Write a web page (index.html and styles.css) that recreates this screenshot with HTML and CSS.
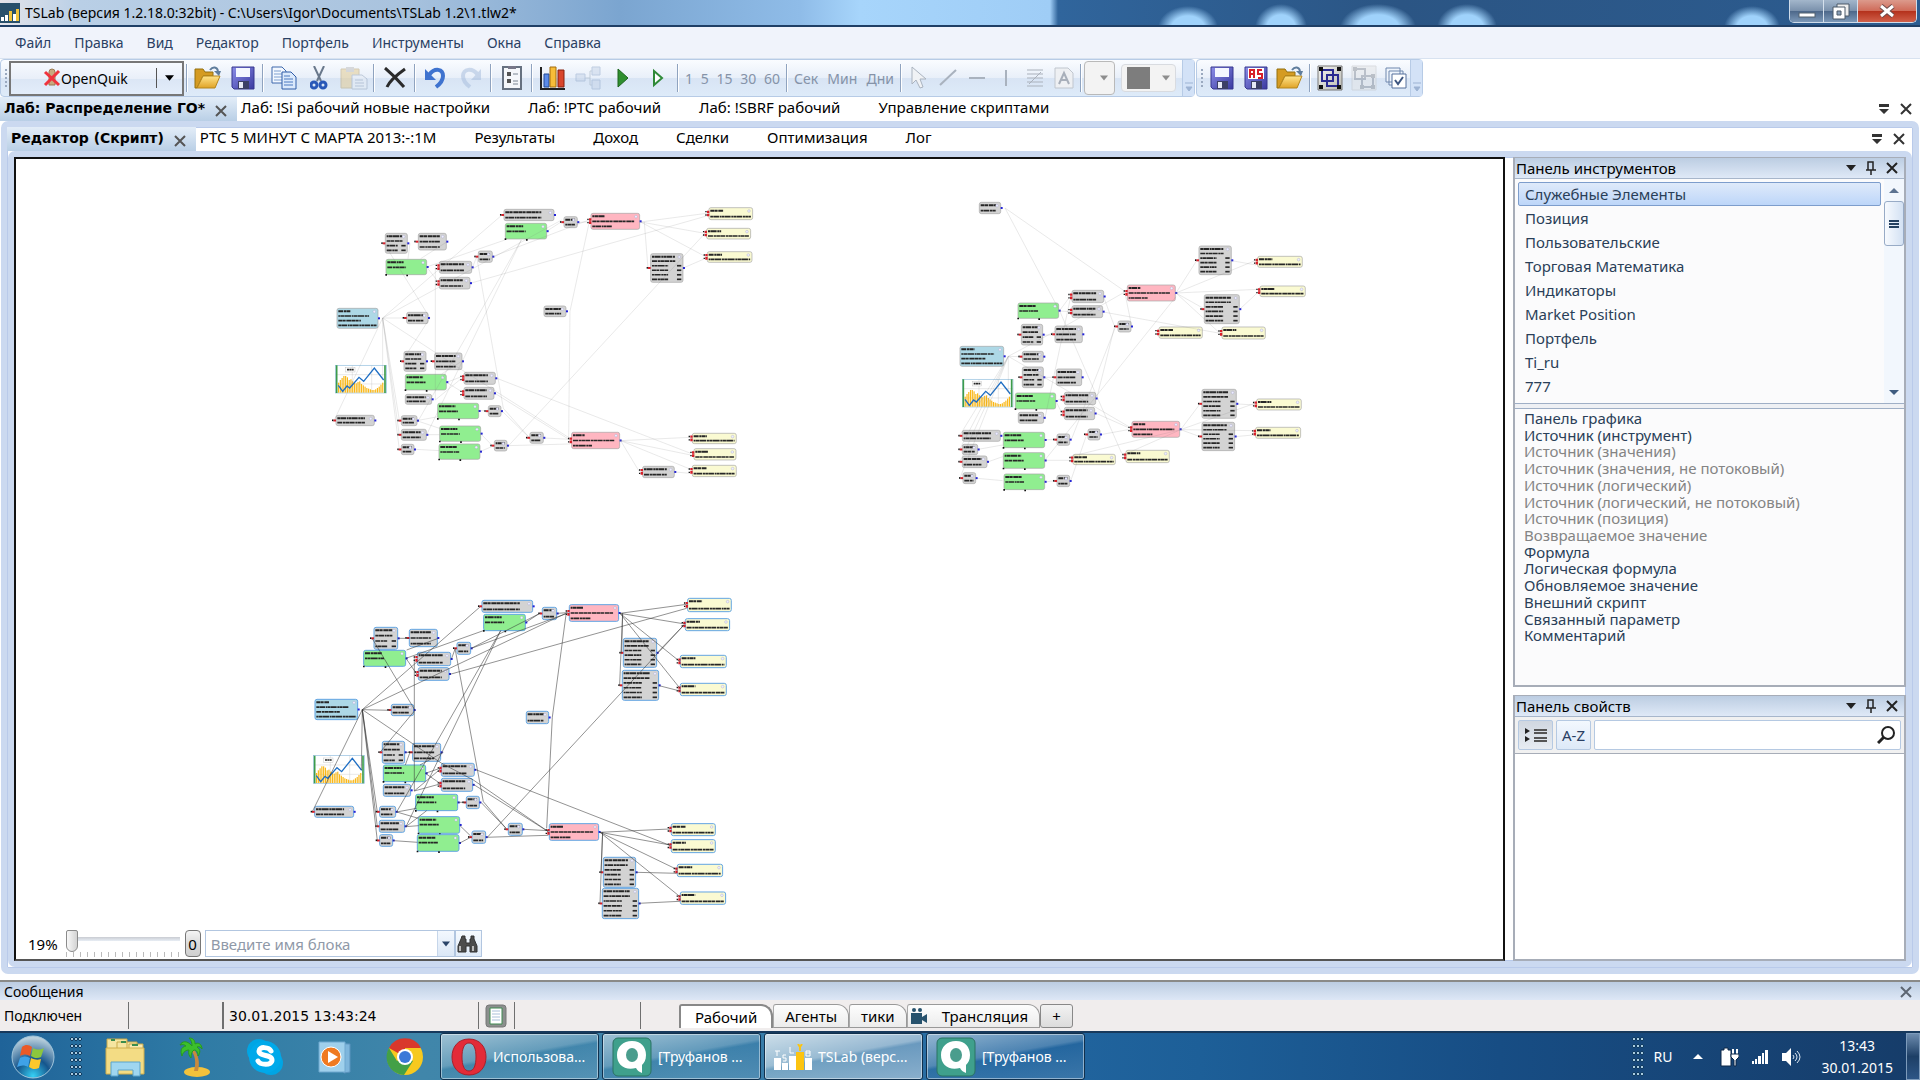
FILE: index.html
```html
<!DOCTYPE html>
<html lang="ru">
<head>
    <meta charset="UTF-8">
    <meta name="viewport" content="width=device-width, initial-scale=1.0">
    <title>TSLab</title>
    <link rel="stylesheet" href="styles.css">
</head>
<body>
    <!-- Shared icons -->
    <svg class="sprite" aria-hidden="true">
        <defs>
            <linearGradient id="gold" x1="0" y1="0" x2="0" y2="1"><stop offset="0" stop-color="#ffe48a"/><stop offset="1" stop-color="#e0a326"/></linearGradient>
            <linearGradient id="violet" x1="0" y1="0" x2="1" y2="1"><stop offset="0" stop-color="#8c8ee8"/><stop offset="1" stop-color="#3a3aa0"/></linearGradient>
            <linearGradient id="grid-btn" x1="0" y1="0" x2="1" y2="1"><stop offset="0" stop-color="#f4f4f0"/><stop offset="1" stop-color="#b9bab4"/></linearGradient>
        </defs>
        <symbol id="i-open" viewBox="0 0 28 26">
            <path d="M1 4h8l2 3h8v4H9L3 23H1z" fill="#d59b22" stroke="#94700f"/>
            <path d="M9 11h17l-5 12H3z" fill="url(#gold)" stroke="#b5861c"/>
            <path d="M16 5c3-4 7-3 8 1" fill="none" stroke="#5f7d9c" stroke-width="2"/><path d="M20 6h7l-2 5z" fill="#5f7d9c"/>
        </symbol>
        <symbol id="i-save" viewBox="0 0 24 24">
            <path d="M1 1h22v22H3l-2-2z" fill="url(#violet)" stroke="#37378f"/>
            <path d="M5 2h14v9H5z" fill="#f4f7ff"/><path d="M7 15h11v8H7z" fill="#3c3f66"/><path d="M8 16h4v6H8z" fill="#e6e9f5"/>
        </symbol>
        <symbol id="i-saveas" viewBox="0 0 24 24">
            <path d="M1 1h22v22H3l-2-2z" fill="url(#violet)" stroke="#37378f"/>
            <path d="M4 2h16v11H4z" fill="#fff"/><path d="M6 12V4h4v8M6 8h4M18 4h-4v4h4v4h-4" fill="none" stroke="#d8202a" stroke-width="2"/>
            <path d="M7 15h11v8H7z" fill="#3c3f66"/><path d="M8 16h4v6H8z" fill="#e6e9f5"/>
        </symbol>
        <symbol id="i-drop" viewBox="0 0 10 6"><path d="M0 0h10L5 6z" fill="currentColor"/></symbol>
        <symbol id="i-cross" viewBox="0 0 12 12"><path d="M1 1l10 10M11 1L1 11" stroke="currentColor" stroke-width="2" fill="none"/></symbol>
        <symbol id="i-list" viewBox="0 0 10 10"><path d="M0 0h10v3H0zM0 5h10L5 10z" fill="currentColor"/></symbol>
        <symbol id="i-pin" viewBox="0 0 10 14"><path d="M2 9V1h5v8M7 1v8M0 9h10M5 9v5" stroke="currentColor" stroke-width="1.5" fill="none"/></symbol>
        <symbol id="i-chat" viewBox="0 0 40 40">
            <rect x="1" y="1" width="38" height="38" rx="5" fill="#3fa08c" stroke="#2b7263"/>
            <path d="M20 4c9 0 14 6 14 14 0 5-2 8-4 10v8c-3-1-5-3-6-5-11 3-19-3-19-13C5 10 11 4 20 4z" fill="#fff"/><ellipse cx="20" cy="18" rx="6" ry="7" fill="#4a9d8d"/>
        </symbol>
    </svg>

    <header class="titlebar">
        <svg class="app-icon" viewBox="0 0 20 20"><path d="M0 0h20v20H0z" fill="#28506b"/><path d="M1 14h3v4H1zM5 12h3v6H5zM13 11h3v7h-3z" fill="#fff"/><path d="M9 8h3v10H9zM16 6h3v12h-3z" fill="#f0c33c"/></svg>
        <span class="title">TSLab (версия 1.2.18.0:32bit) - C:\Users\Igor\Documents\TSLab 1.2\1.tlw2*</span>
        <div class="window-buttons">
            <button class="min" aria-label="Свернуть"><svg width="18" height="6"><rect x="1" y="1" width="16" height="4" fill="#fff" stroke="#50606f"/></svg></button>
            <button class="max" aria-label="Восстановить"><svg width="18" height="17"><path d="M5 1h12v12H5z" fill="#eee" stroke="#4d5b69"/><path d="M1 4h12v12H1z" fill="#fff" stroke="#4d5b69"/><path d="M5 8h4v4H5z" fill="#8ba0b8" stroke="#4d5b69"/></svg></button>
            <button class="exit" aria-label="Закрыть"><svg width="16" height="14"><path d="M2 2l12 10M14 2L2 12" stroke="#6b4a4a" stroke-width="5"/><path d="M2 2l12 10M14 2L2 12" stroke="#fff" stroke-width="3"/></svg></button>
        </div>
    </header>

    <nav class="menu">
        <a href="#">Файл</a><a href="#">Правка</a><a href="#">Вид</a><a href="#">Редактор</a><a href="#">Портфель</a><a href="#">Инструменты</a><a href="#">Окна</a><a href="#">Справка</a>
    </nav>

    <div class="toolbars">
        <div class="toolbar">
            <i class="grip"></i>
            <button class="quik">
                <svg width="18" height="20"><path d="M6 4a3 3 0 0 1 6 0v13H6z" fill="#c9a87e" stroke="#9a7b52"/><path d="M2 4l14 13M16 3L2 17" stroke="#f0333d" stroke-width="3"/></svg>
                <span>OpenQuik</span>
                <svg class="quik-drop" width="10" height="6"><use href="#i-drop"/></svg>
            </button>
            <i class="sep"></i>
            <button class="tool" aria-label="Открыть"><svg width="28" height="26"><use href="#i-open"/></svg></button>
            <button class="tool" aria-label="Сохранить"><svg width="24" height="24"><use href="#i-save"/></svg></button>
            <i class="sep"></i>
            <button class="tool" aria-label="Копировать"><svg width="26" height="24"><path d="M1 1h10l4 4v12H1z" fill="#f3f8ff" stroke="#3f69ac"/><path d="M3 5h7M3 8h9M3 11h9M3 14h9" stroke="#7fa0d0"/><path d="M11 6h9l5 5v12H11z" fill="#dbe9fb" stroke="#2f5ca8"/><path d="M13 10h6M13 13h9M13 16h9M13 19h9" stroke="#4a79c0"/></svg></button>
            <button class="tool" aria-label="Вырезать"><svg width="18" height="24"><path d="M4 0l7 15M14 0L7 15" stroke="#69788b" stroke-width="2"/><circle cx="4" cy="19" r="3" fill="none" stroke="#2858b8" stroke-width="3"/><circle cx="13" cy="19" r="3" fill="none" stroke="#2858b8" stroke-width="3"/></svg></button>
            <button class="tool faded" aria-label="Вставить"><svg width="28" height="24"><path d="M1 3h18v19H1z" fill="#e3c98a" stroke="#b7a271"/><path d="M6 1h8v5H6z" fill="#bbb"/><path d="M12 9h10l5 4v10H12z" fill="#e6ecf4" stroke="#93a4bb"/><path d="M15 14h8M15 17h9M15 20h9" stroke="#93a4bb"/></svg></button>
            <i class="sep"></i>
            <button class="tool" aria-label="Удалить"><svg width="24" height="22"><path d="M2 1c6 5 13 12 19 19M22 2C15 7 7 13 4 20" stroke="#2b2b2b" stroke-width="3" fill="none"/></svg></button>
            <i class="sep"></i>
            <button class="tool" aria-label="Отменить"><svg width="24" height="24"><path d="M5 9c6-8 14-6 14 1 0 5-3 8-7 11" fill="none" stroke="#3f73cf" stroke-width="4"/><path d="M1 3v11h11z" fill="#3f73cf"/></svg></button>
            <button class="tool faded" aria-label="Повторить"><svg width="24" height="24"><path d="M19 9C13 1 4 3 4 10c0 5 3 8 7 11" fill="none" stroke="#a4bbdc" stroke-width="4"/><path d="M22 3v11H12z" fill="#a4bbdc"/></svg></button>
            <i class="sep"></i>
            <button class="tool" aria-label="Свойства"><svg width="20" height="24"><path d="M1 1h18v22H1z" fill="#f5f7fa" stroke="#667180" stroke-width="2"/><path d="M5 6h4v4H5zM5 13h4v4H5z" fill="#555"/><path d="M11 8h5M11 15h5M11 18h5" stroke="#7a8592"/><path d="M6 0h8v3H6z" fill="#778"/></svg></button>
            <i class="sep"></i>
            <button class="tool" aria-label="График"><svg width="26" height="26"><path d="M1 2v22h24" fill="none" stroke="#222" stroke-width="2"/><path d="M4 9h5v13H4z" fill="#5b8be8" stroke="#234a96"/><path d="M10 2h6v20h-6z" fill="#f7bd38" stroke="#a46c0e"/><path d="M18 5h6v17h-6z" fill="#d9452b" stroke="#86210f"/></svg></button>
            <button class="tool faded" aria-label="Схема"><svg width="26" height="24"><path d="M9 12h6M15 5v14M15 5h3M15 19h3" stroke="#9ab" fill="none"/><path d="M1 8h9v7H1zM17 1h8v8h-8zM17 14h8v9h-8z" fill="#c6d4e8" stroke="#8fa7c9"/></svg></button>
            <button class="tool" aria-label="Пуск"><svg width="12" height="20"><path d="M1 1l10 9-10 9z" fill="#2f8f2f" stroke="#1d641d"/></svg></button>
            <button class="tool" aria-label="Шаг"><svg width="12" height="20"><path d="M2 3l8 7-8 7z" fill="#fff" stroke="#2f8a38" stroke-width="2"/></svg></button>
            <i class="sep"></i>
            <div class="periods"><button>1</button><button>5</button><button>15</button><button>30</button><button>60</button></div>
            <i class="sep"></i>
            <div class="periods units"><button>Сек</button><button>Мин</button><button>Дни</button></div>
            <i class="sep"></i>
            <button class="draw" aria-label="Курсор"><svg width="18" height="24"><path d="M2 1v17l4-4 4 8 3-1-3-8h6z" fill="#f0f2f5" stroke="#aab3bf"/></svg></button>
            <button class="draw" aria-label="Линия"><svg width="18" height="18"><path d="M1 16L17 1" stroke="#a9b2be" stroke-width="2"/></svg></button>
            <button class="draw" aria-label="Горизонталь"><svg width="18" height="4"><path d="M1 2h16" stroke="#a9b2be" stroke-width="2"/></svg></button>
            <button class="draw" aria-label="Вертикаль"><svg width="4" height="18"><path d="M2 1v16" stroke="#a9b2be" stroke-width="2"/></svg></button>
            <button class="draw" aria-label="Уровни"><svg width="18" height="18"><path d="M1 1h16M1 5h16M1 9h16M1 13h16M1 17h16M3 15L15 3" stroke="#aab1bb"/></svg></button>
            <button class="draw" aria-label="Текст"><svg width="20" height="22"><path d="M1 1h13l5 5v15H1z" fill="#eef0f3" stroke="#c0c6ce"/><path d="M5 17l5-11 5 11M7 13h6" fill="none" stroke="#a8afba" stroke-width="2"/></svg></button>
            <i class="sep"></i>
            <button class="pick" aria-label="Толщина"><svg width="8" height="6"><use href="#i-drop"/></svg></button>
            <button class="pick color" aria-label="Цвет"><i></i><svg width="8" height="6"><use href="#i-drop"/></svg></button>
            <span class="overflow"><svg width="8" height="10"><path d="M0 1h8M1 5h6L4 9z" fill="#9db3d3" stroke="#9db3d3"/></svg></span>
        </div>
        <div class="toolbar script-tools">
            <i class="grip"></i>
            <button class="tool" aria-label="Сохранить скрипт"><svg width="24" height="24"><use href="#i-save"/></svg></button>
            <button class="tool" aria-label="Сохранить как"><svg width="24" height="24"><use href="#i-saveas"/></svg></button>
            <button class="tool" aria-label="Открыть скрипт"><svg width="28" height="26"><use href="#i-open"/></svg></button>
            <i class="sep"></i>
            <button class="tool" aria-label="Группировать"><svg width="26" height="26"><path d="M1 1h24v24H1z" fill="url(#grid-btn)" stroke="#777"/><path d="M5 5h11v11H5zM10 10h11v11H10z" fill="none" stroke="#2a2a90" stroke-width="2"/><path d="M2 2h4v4H2zM20 2h4v4h-4zM2 20h4v4H2zM20 20h4v4h-4z" fill="#111"/></svg></button>
            <button class="tool faded" aria-label="Разгруппировать"><svg width="26" height="26"><path d="M1 1h24v24H1z" fill="#e4e5e6" stroke="#c2c4c6"/><path d="M4 4h10v10H4zM11 11h11v11H11z" fill="none" stroke="#888f9a" stroke-width="2"/><path d="M2 2h4v4H2zM20 9h4v4h-4zM9 20h4v4H9zM20 20h4v4h-4z" fill="#8a8f96"/></svg></button>
            <button class="draw" aria-label="Проверить"><svg width="22" height="22"><path d="M1 1h14v14H1zM4 4h14v14H4z" fill="#eef4fc" stroke="#6e87ad"/><path d="M7 7h14v14H7z" fill="#fff" stroke="#56709c"/><path d="M10 13l3 4 5-7" fill="none" stroke="#3d557f" stroke-width="2"/></svg></button>
            <span class="overflow"><svg width="8" height="10"><path d="M0 1h8M1 5h6L4 9z" fill="#9db3d3" stroke="#9db3d3"/></svg></span>
        </div>
    </div>

    <nav class="tabs">
        <a class="tab active" href="#">Лаб: Распределение ГО*<svg width="12" height="12"><use href="#i-cross"/></svg></a>
        <a class="tab" href="#">Лаб: !Si рабочий новые настройки</a><a class="tab" href="#">Лаб: !РТС рабочий</a><a class="tab" href="#">Лаб: !SBRF рабочий</a><a class="tab" href="#">Управление скриптами</a>
        <span class="tab-tools"><svg width="10" height="10"><use href="#i-list"/></svg><svg width="12" height="12"><use href="#i-cross"/></svg></span>
    </nav>

    <div class="frame outer">
        <nav class="tabs">
            <a class="tab active" href="#">Редактор (Скрипт)<svg width="12" height="12"><use href="#i-cross"/></svg></a>
            <a class="tab" href="#">РТС 5 МИНУТ С МАРТА 2013:-:1М</a><a class="tab" href="#">Результаты</a><a class="tab" href="#">Доход</a><a class="tab" href="#">Сделки</a><a class="tab" href="#">Оптимизация</a><a class="tab" href="#">Лог</a>
            <span class="tab-tools"><svg width="10" height="10"><use href="#i-list"/></svg><svg width="12" height="12"><use href="#i-cross"/></svg></span>
        </nav>
        <div class="frame inner">
            <main class="canvas">
                <svg class="diagram" id="diagram"></svg>
                <div class="zoombar">
                    <label for="scale">19%</label>
                    <span class="slider"><input type="range" id="scale" min="0" max="100" value="0"></span>
                    <button class="reset">0</button>
                    <span class="find"><input type="text" placeholder="Введите имя блока" aria-label="Имя блока"><button aria-label="Список"><svg width="8" height="6"><use href="#i-drop"/></svg></button></span>
                    <button class="binoculars" aria-label="Найти"><svg width="22" height="18"><path d="M5 1h3v3h1v4h4V4h1V1h3v3l3 7v6h-7v-6H9v6H1v-6l3-7z" fill="#4c4c4c" stroke="#333"/><path d="M3 11v5M16 11v5" stroke="#bbb" stroke-width="2"/></svg></button>
                </div>
            </main>
            <aside class="side">
                <section class="panel tools">
                    <h2>Панель инструментов<span><svg width="10" height="6"><use href="#i-drop"/></svg><svg width="10" height="14"><use href="#i-pin"/></svg><svg width="12" height="12"><use href="#i-cross"/></svg></span></h2>
                    <div class="groups">
                        <ul>
                            <li class="selected">Служебные Элементы</li><li>Позиция</li><li>Пользовательские</li><li>Торговая Математика</li><li>Индикаторы</li><li>Market Position</li><li>Портфель</li><li>Ti_ru</li><li>777</li>
                        </ul>
                        <div class="scroll">
                            <button aria-label="Вверх"><svg width="10" height="5"><path d="M0 5h10L5 0z" fill="#5d7391"/></svg></button>
                            <i class="thumb"><svg width="10" height="8"><path d="M0 1h10M0 4h10M0 7h10" stroke="#24405f" stroke-width="2"/></svg></i>
                            <button class="down" aria-label="Вниз"><svg width="10" height="5"><path d="M0 0h10L5 5z" fill="#3f5c80"/></svg></button>
                        </div>
                    </div>
                    <ul class="blocks">
                        <li>Панель графика</li>
                        <li>Источник (инструмент)</li>
                        <li class="off">Источник (значения)</li>
                        <li class="off">Источник (значения, не потоковый)</li>
                        <li class="off">Источник (логический)</li>
                        <li class="off">Источник (логический, не потоковый)</li>
                        <li class="off">Источник (позиция)</li>
                        <li class="off">Возвращаемое значение</li>
                        <li>Формула</li>
                        <li>Логическая формула</li>
                        <li>Обновляемое значение</li>
                        <li>Внешний скрипт</li>
                        <li>Связанный параметр</li>
                        <li>Комментарий</li>
                    </ul>
                </section>
                <section class="panel props">
                    <h2>Панель свойств<span><svg width="10" height="6"><use href="#i-drop"/></svg><svg width="10" height="14"><use href="#i-pin"/></svg><svg width="12" height="12"><use href="#i-cross"/></svg></span></h2>
                    <div class="props-bar">
                        <button class="pressed" aria-label="По группам"><svg width="22" height="14"><path d="M0 0l5 3-5 3zM0 8l5 3-5 3z" fill="#222"/><path d="M9 2h13M9 5h13M9 10h13M9 13h13" stroke="#555" stroke-width="2"/></svg></button>
                        <button>A-Z</button>
                        <span class="search"><input type="text" aria-label="Поиск свойства"><svg width="18" height="18"><circle cx="11" cy="7" r="6" fill="none" stroke="#222" stroke-width="2"/><path d="M7 11l-6 6" stroke="#222" stroke-width="3"/></svg></span>
                    </div>
                </section>
            </aside>
        </div>
    </div>

    <div class="messages">Сообщения<svg width="12" height="12"><use href="#i-cross"/></svg></div>

    <footer class="status">
        <span class="cell state">Подключен</span>
        <span class="cell blank"></span>
        <span class="cell stamp">30.01.2015 13:43:24</span>
        <span class="cell log"><svg width="22" height="24"><rect x="1" y="1" width="20" height="22" rx="3" fill="#8b8f8d" stroke="#777"/><path d="M5 4h12v16H5z" fill="#fff" stroke="#3f8a50"/><path d="M7 7h8M7 10h8M7 13h8M7 16h8" stroke="#a9c0da"/></svg></span>
        <span class="cell rest"></span>
        <div class="desks">
            <button class="on">Рабочий</button><button>Агенты</button><button>тики</button><button class="cam"><svg width="18" height="18"><circle cx="4" cy="3" r="2" fill="#27526d"/><circle cx="10" cy="3" r="2" fill="#27526d"/><path d="M1 6h11v4l5-3v9l-5-3v4H1z" fill="#27526d"/></svg>Трансляция</button><button class="add">+</button>
        </div>
    </footer>

    <div class="taskbar">
        <button class="start" aria-label="Пуск">
            <svg width="44" height="44"><defs><radialGradient id="orb" cx=".5" cy=".95" r=".9"><stop offset="0" stop-color="#35d0f5"/><stop offset=".45" stop-color="#15558c"/><stop offset="1" stop-color="#b9cfdc"/></radialGradient></defs><circle cx="22" cy="22" r="21" fill="url(#orb)" stroke="#9fc4da"/>
            <path d="M11 12c4-3 7-2 10 0l-2 9c-3-2-6-2-10 0z" fill="#ea5a28"/><path d="M22 13c4 2 7 2 11 0l-3 9c-4 2-7 1-10-1z" fill="#8cc63e"/><path d="M9 23c4-2 7-2 10 0l-2 9c-3-2-7-2-11 0z" fill="#3fa2e8"/><path d="M20 23c4 2 7 2 10 1l-2 9c-4 2-7 1-10-1z" fill="#fcc82c"/></svg>
        </button>
        <i class="dots"></i>
        <button class="launch" aria-label="Проводник"><svg width="40" height="40"><path d="M2 2h20v34H2zM12 5h20v30H12z" fill="#f5e5a0" stroke="#c7a948"/><path d="M24 7h14v28H24z" fill="#f8eab0" stroke="#c7a948"/><path d="M6 3h4M16 5h5M27 8h6" stroke="#3a8d4d" stroke-width="2"/><path d="M1 11h38v26H1z" fill="#f3dc84" stroke="#cfae4c"/><path d="M6 25h29v14h-7v-6H13v6H6z" fill="#9fd6f0" stroke="#5aa4cb"/></svg></button>
        <button class="launch" aria-label="Пальма"><svg width="32" height="40"><ellipse cx="18" cy="35" rx="13" ry="5" fill="#f3c23c"/><path d="M14 11c6 7 7 15 5 23h-4c2-8 2-15-4-22z" fill="#c88a3e"/><path d="M13 9C8 3 3 4 1 8c3-1 5 0 6 1-5 1-6 5-4 10 1-4 4-6 7-6-1 3 0 6 2 8 0-4 1-7 3-8 3 0 4 3 4 6 3-4 2-7-1-9 2-1 4 0 5 2 0-5-4-7-7-5 0-4-2-6-6-6 2 2 3 4 3 8z" fill="#3cbf2c" stroke="#279a1d"/></svg></button>
        <button class="launch" aria-label="Skype"><svg width="38" height="38"><circle cx="13" cy="13" r="12" fill="#00a5e4"/><circle cx="25" cy="25" r="12" fill="#00a5e4"/><circle cx="19" cy="19" r="16" fill="#00a9ea"/><path d="M25 13c-2-4-12-5-12 0 0 6 13 3 13 9 0 6-12 5-14 1" fill="none" stroke="#fff" stroke-width="5" stroke-linecap="round"/></svg></button>
        <button class="launch" aria-label="Плеер"><svg width="34" height="34"><path d="M8 3l24 1v28l-6 1z" fill="#7eb6dc" stroke="#5b93bd"/><path d="M1 2h26v30H1z" fill="#9fd0ec" stroke="#6ea8cf"/><circle cx="13" cy="17" r="10" fill="#ef7a21" stroke="#fff"/><path d="M10 11l10 6-10 6z" fill="#fff"/></svg></button>
        <button class="launch" aria-label="Chrome"><svg width="38" height="38"><circle cx="19" cy="19" r="18" fill="#f7c91e"/><path d="M19 19L3 10a18 18 0 0 1 32 0H19z" fill="#d9382c"/><path d="M19 19l8 4-9 14A18 18 0 0 1 3 10l8 13z" fill="#43a047"/><circle cx="19" cy="19" r="8" fill="#fff"/><circle cx="19" cy="19" r="6" fill="#3b78d8"/></svg></button>
        <button class="task opera"><svg width="36" height="38"><path fill-rule="evenodd" d="M18 1c11 0 17 8 17 18s-6 18-17 18S1 29 1 19 7 1 18 1zm0 4c-5 0-7 6-7 14s2 14 7 14 7-6 7-14-2-14-7-14z" fill="#e32b38" stroke="#a9202b"/></svg><span>Использова...</span></button>
        <button class="task"><svg width="40" height="40"><use href="#i-chat"/></svg><span>[Труфанов ...</span></button>
        <button class="task current"><svg width="38" height="26"><path d="M0 14h7v12H0zM8 19h6v7H8zM15 12h7v14h-7zM31 14h7v12h-7z" fill="#fff"/><path d="M22 8h8v18h-8z" fill="#fcc411"/><path d="M1 7h5M3 7v5M12 11H9v3h3v3H9M16 3v6h4M32 7v5h4V7zM32 9h4" fill="none" stroke="#fff"/><path d="M24 0l2 3 2-3M26 3v4" fill="none" stroke="#fcc411" stroke-width="2"/></svg><span>TSLab (верс...</span></button>
        <button class="task"><svg width="40" height="40"><use href="#i-chat"/></svg><span>[Труфанов ...</span></button>
        <div class="tray">
            <i class="dots"></i>
            <span class="lang">RU</span>
            <svg class="more" width="10" height="5"><path d="M0 5h10L5 0z" fill="#fff"/></svg>
            <svg width="20" height="20"><path d="M2 3h3V1h4v2h3v16H2z" fill="#fff" stroke="#0d2746"/><path d="M14 2v5M18 2v5" stroke="#fff" stroke-width="2"/><path d="M12 7h8v3l-3 3v6h-2v-6l-3-3z" fill="#fff" stroke="#0d2746"/></svg>
            <svg width="16" height="14"><path d="M0 11h2v3H0zM3 9h2v5H3zM6 6h3v8H6zM10 3h2v11h-2zM13 0h3v14h-3z" fill="#fff"/></svg>
            <svg width="20" height="20"><path d="M1 6h4l5-5v18l-5-5H1z" fill="#fff"/><path d="M12 8q2 2 0 4M14 6q4 4 0 8M16 4q6 6 0 12" fill="none" stroke="#dce8f4"/></svg>
            <div class="clock"><span>13:43</span><span>30.01.2015</span></div>
            <button class="show-desktop" aria-label="Показать рабочий стол"></button>
        </div>
    </div>
    <script src="script.js"></script>
</body>
</html>
```
FILE: styles.css
```css
* {
    box-sizing: border-box;
}
body {
    display: flex;
    flex-direction: column;
    height: 100vh;
    margin: 0;
    overflow: hidden;
    background-color: #fff;
    color: #000;
    font-family: "Noto Sans", sans-serif;
    font-size: 15px;
}
button, input {
    font: inherit;
    color: inherit;
    margin: 0;
    padding: 0;
    border: none;
    background: none;
}
a {
    color: inherit;
    text-decoration: none;
}
ul {
    list-style: none;
    margin: 0;
    padding: 0;
}
svg {
    flex: none;
    display: block;
}
.sprite {
    position: absolute;
    width: 0;
    height: 0;
}
.titlebar, .menu, .toolbars, .messages, .status, .taskbar {
    font-size: 14px;
}

/* Title bar */
.titlebar {
    display: flex;
    align-items: center;
    flex: none;
    height: 27px;
    border-bottom: 2px solid #1f3f66;
    background-image:
        radial-gradient(ellipse 30px 22px at 1188px 28px, #9fd2fb 55%, transparent),
        radial-gradient(ellipse 26px 24px at 1281px 28px, #9fd2fb 55%, transparent),
        radial-gradient(ellipse 38px 24px at 1378px 28px, #9fd2fb 55%, transparent),
        radial-gradient(ellipse 30px 24px at 1467px 28px, #9fd2fb 55%, transparent),
        radial-gradient(ellipse 28px 22px at 1752px 28px, #9fd2fb 55%, transparent),
        linear-gradient(90deg, #e4e4ea, #b9cfe6 80px, #a9c3de 400px, #7ba5d0 620px, #8fbce8 800px, #a7d5fb 860px, #9fcdf6 1050px, #30659c 1058px, #2b5584 1400px, #2c5c90);
}
.app-icon {
    width: 20px;
    height: 20px;
}
.title {
    margin-left: 5px;
    flex: 1;
}
.window-buttons {
    display: flex;
    align-self: flex-start;
    height: 23px;
    margin-right: 3px;
    border: 1px solid #cfdcea;
    border-top: none;
    border-radius: 0 0 5px 5px;
    overflow: hidden;
}
.window-buttons button {
    display: flex;
    align-items: center;
    justify-content: center;
    width: 34px;
    background: linear-gradient(#a3b6cb, #7990ab 50%, #4c6789 50%, #7c98b8);
    border-right: 1px solid #d5e0ec;
}
.window-buttons .min {
    padding-top: 8px;
}
.window-buttons .exit {
    width: 58px;
    border: none;
    background: linear-gradient(#dc9a8c, #cf6a58 50%, #b4301b 50%, #d0604a);
}

/* Menu */
.menu {
    display: flex;
    flex: none;
    align-items: center;
    gap: 23px;
    height: 32px;
    padding-left: 15px;
    background-color: #f0f3fb;
    border-bottom: 1px solid #d8e2f0;
    color: #2a3f63;
}

/* Toolbars */
.toolbars {
    display: flex;
    flex: none;
    gap: 1px;
    height: 38px;
}
.toolbar {
    display: flex;
    align-items: center;
    padding-left: 4px;
    border: 1px solid #b7cbe6;
    border-radius: 4px;
    background: linear-gradient(#fafcff, #e8eff9 50%, #d8e4f4 50%, #deebf9);
}
.grip {
    width: 2px;
    height: 18px;
    margin-right: 2px;
    background: repeating-linear-gradient(#9aa9bf 0 2px, transparent 2px 4px);
}
.quik {
    display: flex;
    align-items: center;
    width: 175px;
    height: 35px;
    padding-left: 32px;
    border: 2px solid #777;
    background: linear-gradient(#f6f9fe, #e9eff9 50%, #dbe6f5 50%, #e3edfa);
    text-align: left;
}
.quik span {
    flex: 1;
}
.quik-drop {
    width: 26px;
    height: 20px;
    padding: 7px 8px;
    border-left: 1px solid #555;
}
.sep {
    width: 2px;
    height: 28px;
    margin: 0 2px;
    border-left: 1px solid #8fa3bf;
    border-right: 1px solid #fff;
}
.tool, .draw {
    display: flex;
    align-items: center;
    justify-content: center;
    width: 35px;
    height: 32px;
}
.draw {
    width: 29px;
}
.script-tools .tool {
    width: 34px;
}
.faded {
    opacity: 0.5;
}
.periods {
    display: flex;
    justify-content: space-between;
    width: 103px;
    padding: 0 4px;
    color: #8593a8;
}
.periods.units {
    width: 108px;
}
.pick {
    display: flex;
    align-items: center;
    justify-content: flex-end;
    width: 31px;
    height: 34px;
    padding-right: 6px;
    border: 1px solid #b9b9b9;
    border-radius: 4px;
    background-color: #f3f3f3;
    color: #8d8d8d;
}
.pick.color {
    justify-content: space-between;
    width: 55px;
    height: 28px;
    margin: 0 6px;
    padding: 0 5px;
    border-color: #d8dbe0;
}
.pick i {
    width: 23px;
    height: 22px;
    background-color: #7d7d7d;
}
.overflow {
    display: flex;
    align-items: flex-end;
    align-self: stretch;
    justify-content: center;
    width: 12px;
    padding-bottom: 4px;
    border-left: 1px solid #b7cbe6;
    background-color: #d3e2f7;
}

/* Tabs */
.tabs {
    display: flex;
    flex: none;
    align-items: center;
    gap: 38px;
    height: 24px;
}
.tab {
    white-space: nowrap;
    line-height: 20px;
    padding-bottom: 4px;
}
.tab.active {
    display: flex;
    align-items: center;
    gap: 10px;
    height: 24px;
    margin-right: -34px;
    padding: 0 10px 2px 4px;
    font-family: "DejaVu Sans", sans-serif;
    font-size: 14px;
    font-weight: bold;
    background: linear-gradient(#e3edf8, #b9cfe6);
}
.tab.active svg {
    margin-top: 6px;
    color: #555;
}
.tab-tools {
    display: flex;
    align-items: center;
    gap: 11px;
    margin-left: auto;
    padding-right: 8px;
    color: #333;
}

/* Frames around the documents */
.frame {
    display: flex;
    flex: 1;
    min-height: 0;
    border: 6px solid #cbd9f0;
    border-radius: 7px;
    background-color: #fff;
    box-shadow: inset 0 0 0 1px #b9caea;
}
.outer {
    flex-direction: column;
    margin: 0 1px;
}
.inner {
    margin: 0 1px 1px;
    gap: 8px;
}

/* Script canvas */
.canvas {
    display: flex;
    flex-direction: column;
    flex: 1;
    min-width: 0;
    border: 2px solid #111;
    border-bottom-color: #555;
    background-color: #fff;
}
.diagram {
    flex: 1;
    width: 100%;
    min-height: 0;
}
.zoombar {
    display: flex;
    align-items: center;
    height: 29px;
    padding: 0 0 2px 12px;
}
.slider {
    width: 114px;
    height: 27px;
    margin: 0 5px 0 8px;
    background: repeating-linear-gradient(90deg, #bbb 0 1px, transparent 1px 7px) 0 100% / 100% 5px no-repeat;
}
.slider input {
    -webkit-appearance: none;
    appearance: none;
    width: 100%;
    height: 22px;
    background: linear-gradient(#c9ccd2, #e8eef5) 0 7px / 100% 4px no-repeat;
}
.slider input::-webkit-slider-thumb {
    -webkit-appearance: none;
    width: 12px;
    height: 22px;
    border: 1px solid #8b8b8b;
    border-radius: 2px 2px 6px 6px;
    background: linear-gradient(90deg, #f8f8f8, #d3d3d3);
}
.reset {
    width: 16px;
    height: 27px;
    margin-right: 4px;
    border: 1px solid #777;
    border-radius: 4px;
    background: linear-gradient(#f5f5f5, #dcdcdc 50%, #cfcfcf);
}
.find {
    display: flex;
    width: 250px;
    height: 27px;
    border: 1px solid #b2c6e0;
}
.find input {
    flex: 1;
    min-width: 0;
    padding-left: 5px;
    background-color: #fff;
}
.find input::placeholder {
    color: #8f99a8;
}
.find button {
    display: flex;
    align-items: center;
    justify-content: center;
    width: 17px;
    color: #2a4468;
    background: linear-gradient(#f3f8fe, #dbe7f6);
    border-left: 1px solid #c6d6ea;
}
.binoculars {
    display: flex;
    align-items: center;
    justify-content: center;
    width: 27px;
    height: 27px;
    border: 1px solid #b2c6e0;
    background: linear-gradient(#f6fafe, #dfeaf8);
}

/* Side panels */
.side {
    display: flex;
    flex-direction: column;
    gap: 8px;
    width: 393px;
}
.panel {
    display: flex;
    flex-direction: column;
    border: 2px solid #a7adb8;
    border-top-width: 1px;
    background-color: #fff;
}
.panel h2 {
    display: flex;
    flex: none;
    align-items: center;
    justify-content: space-between;
    height: 21px;
    margin: 0;
    padding: 0 6px 0 1px;
    font-size: 15px;
    font-weight: normal;
    background: linear-gradient(#bccde2, #dfe9f7);
    border-bottom: 1px solid #a7b6cb;
}
.panel h2 span {
    display: flex;
    align-items: center;
    gap: 10px;
    color: #222;
}
.tools {
    flex: none;
    background-color: #eef0f4;
    color: #2a3f58;
}
.tools h2 {
    color: #000;
}
.groups {
    display: flex;
    height: 225px;
    margin-bottom: 4px;
    border-bottom: 1px solid #9fafc6;
    background-color: #fbfbfc;
}
.groups ul {
    flex: 1;
    padding: 3px 3px 0 3px;
}
.groups li {
    height: 24px;
    padding-left: 6px;
    line-height: 23px;
    border: 1px solid transparent;
}
.groups .selected {
    border-color: #7d9dcc;
    border-radius: 2px;
    background: linear-gradient(#dfeafa, #bdd6f9);
}
.scroll {
    display: flex;
    flex-direction: column;
    width: 20px;
    background-color: #f2f7fd;
}
.scroll button {
    display: flex;
    align-items: center;
    justify-content: center;
    height: 22px;
}
.scroll .down {
    margin-top: auto;
}
.thumb {
    display: flex;
    align-items: center;
    justify-content: center;
    height: 45px;
    border: 1px solid #98abc6;
    border-radius: 3px;
    background: linear-gradient(90deg, #f7fafe, #d3e1f3);
}
.blocks {
    display: grid;
    grid-template-rows: repeat(14, 1fr);
    flex: none;
    height: 277px;
    padding: 1px 9px 41px;
    line-height: 16px;
    border-top: 1px solid #9fafc6;
    background-color: #fbfbfc;
}
.off {
    color: #848484;
}
.props {
    flex: 1;
}
.props-bar {
    display: flex;
    gap: 3px;
    height: 37px;
    padding: 3px;
    background-color: #f1f1f1;
    border-bottom: 1px solid #a7adb8;
}
.props-bar button {
    display: flex;
    align-items: center;
    justify-content: center;
    width: 35px;
    border: 1px solid #b5c9e2;
    border-radius: 2px;
    background: linear-gradient(#f3f8fe, #dde9f8);
    color: #2a3f63;
}
.props-bar .pressed {
    background: linear-gradient(#d0d7e0, #e7ecf2);
}
.search {
    display: flex;
    align-items: center;
    flex: 1;
    padding-right: 5px;
    border: 1px solid #b5c9e2;
    border-radius: 2px;
    background-color: #fff;
}
.search input {
    flex: 1;
    min-width: 0;
    height: 26px;
}

/* Messages and status */
.messages {
    display: flex;
    flex: none;
    align-items: center;
    justify-content: space-between;
    height: 20px;
    margin-top: 6px;
    padding: 2px 8px 0 4px;
    border-top: 2px solid #8a8a88;
    background: linear-gradient(#bccde2, #dde7f6);
    line-height: 18px;
}
.messages svg {
    color: #5d6672;
}
.status {
    display: flex;
    flex: none;
    align-items: center;
    height: 31px;
    background-color: #f0eded;
}
.cell {
    display: flex;
    align-items: center;
    height: 27px;
    padding-left: 4px;
    border-right: 1px solid #6f6f6f;
}
.state {
    width: 129px;
}
.blank {
    width: 95px;
    border-right-width: 2px;
}
.stamp {
    width: 255px;
    padding-left: 5px;
    font-family: "DejaVu Sans", sans-serif;
}
.log {
    width: 36px;
    padding-left: 6px;
}
.rest {
    width: 126px;
}
.desks {
    display: flex;
    margin-left: 38px;
    height: 24px;
    font-size: 15px;
}
.desks button {
    display: flex;
    align-items: center;
    padding: 0 11px;
    border: 1px solid #999;
    border-left-color: #aaa;
    border-radius: 3px 12px 0 0;
    background: linear-gradient(#fdfdfd, #ececec);
}
.desks .on {
    padding: 0 14px;
    border: 2px solid #888;
    border-bottom: none;
    background: #fff;
}
.desks .cam {
    gap: 14px;
    padding-left: 2px;
}
.desks .add {
    border-color: #888;
    border-radius: 3px;
    background: linear-gradient(#f2f2f2, #dcdcdc);
}

/* Windows taskbar */
.taskbar {
    display: flex;
    flex: none;
    align-items: center;
    height: 49px;
    border-top: 2px solid #17395c;
    background: linear-gradient(90deg, #1f6399, #2f7ba5 200px, #4086aa 420px, #3d82ab 700px, #2266a0 1000px, #1d5f98 1200px, #174d84 1500px, #163c69);
    color: #fff;
}
.start {
    margin-left: 11px;
}
.dots {
    width: 12px;
    height: 40px;
    background: radial-gradient(circle at 2px 2px, #a9cbe0 1px, #123c60 1px 2px, transparent 2px) 0 0 / 4px 7px;
}
.start + .dots {
    margin: 0 8px 0 15px;
}
.launch {
    display: flex;
    align-items: center;
    justify-content: center;
    width: 70px;
}
.task {
    display: flex;
    align-items: center;
    width: 159px;
    height: 47px;
    margin-right: 3px;
    padding-left: 9px;
    border: 1px solid #10304d;
    border-radius: 3px;
    box-shadow: inset 0 0 0 1px rgba(255, 255, 255, 0.45);
    background: linear-gradient(170deg, rgba(255, 255, 255, 0.5), rgba(255, 255, 255, 0.2) 45%, rgba(255, 255, 255, 0.02) 50%, rgba(255, 255, 255, 0.12));
}
.task.current {
    background: linear-gradient(170deg, rgba(255, 255, 255, 0.75), rgba(255, 255, 255, 0.5) 45%, rgba(255, 255, 255, 0.3) 50%, rgba(255, 255, 255, 0.45));
}
.task span {
    margin-left: 6px;
    white-space: nowrap;
}
.opera {
    padding-left: 10px;
}
.tray {
    display: flex;
    align-items: center;
    align-self: stretch;
    gap: 13px;
    margin-left: auto;
}
.lang {
    margin: 0 8px 0 -4px;
}
.more {
    margin-right: 3px;
}
.clock {
    display: flex;
    flex-direction: column;
    align-items: center;
    margin: 0 0 0 7px;
    line-height: 22px;
}
.show-desktop {
    align-self: stretch;
    width: 14px;
    border: 1px solid #7d9bbb;
    background: linear-gradient(#6d8cae, #1d3f66 50%, #2d5686);
}

/* Diagram parts */
.node {
    stroke: #a5a5a5;
    stroke-width: 2;
}
.picked .node {
    stroke: #62a5e2;
    stroke-width: 3;
}
.gray { fill: #d3d3d3; }
.green { fill: #90ee90; }
.pink { fill: #ffb6c1; }
.yellow { fill: #fafad2; }
.blue { fill: #add8e6; }
.link {
    fill: none;
    stroke: #777;
    stroke-width: 1;
    opacity: 0.5;
}
.picked .link {
    stroke: #333;
    stroke-width: 2;
    opacity: 0.8;
}
.strip {
    fill: none;
    stroke: #262626;
    stroke-width: 5;
}
.strip.head {
    stroke-width: 6;
}
.in { fill: #d81e28; }
.out { fill: #2222d8; }
.pin { fill: #111; }
```
FILE: script.js
```js
// Blocks: kind, x, y, width, height, number of text strips, 1 when the block has no input
// Coordinates are in block units, three units make one pixel
const schemes = [
    {
        x: 294, y: 31,
        nodes: [
            ["gray", 582, 58, 150, 34, 2], ["green", 586, 100, 124, 47, 2], ["gray", 762, 80, 40, 33, 2], ["pink", 843, 70, 146, 48, 3],
            ["yellow", 1197, 53, 131, 36, 2], ["yellow", 1190, 115, 132, 32, 2], ["yellow", 1192, 185, 134, 32, 2],
            ["gray", 226, 130, 66, 60, 4], ["gray", 325, 130, 84, 50, 3], ["green", 228, 208, 122, 46, 2],
            ["gray", 388, 214, 97, 36, 2], ["gray", 388, 262, 92, 35, 2], ["gray", 505, 183, 42, 34, 2], ["gray", 1022, 191, 97, 86, 6],
            ["blue", 81, 355, 123, 60, 4], ["gray", 290, 367, 64, 34, 2], ["gray", 702, 348, 66, 32, 2, 1],
            ["gray", 282, 484, 66, 60, 4], ["gray", 374, 489, 82, 50, 3], ["green", 286, 553, 123, 47, 2],
            ["gray", 462, 547, 94, 36, 2], ["gray", 462, 592, 90, 36, 2], ["gray", 286, 613, 79, 30, 2, 1],
            ["green", 383, 640, 123, 46, 2], ["gray", 535, 647, 38, 33, 2], ["gray", 78, 676, 115, 31, 2],
            ["gray", 274, 677, 47, 30, 2], ["gray", 274, 718, 75, 33, 2], ["gray", 274, 763, 38, 31, 2],
            ["green", 389, 708, 123, 46, 2], ["green", 387, 762, 123, 46, 2], ["gray", 553, 751, 38, 32, 2], ["gray", 660, 727, 40, 33, 2],
            ["pink", 785, 727, 144, 49, 3], ["yellow", 1147, 730, 132, 31, 2], ["yellow", 1152, 776, 126, 34, 2], ["yellow", 1147, 826, 132, 34, 2],
            ["gray", 998, 829, 95, 34, 2]
        ],
        links: [
            [218, 384, 576, 75], [218, 384, 755, 90], [218, 384, 290, 384], [218, 384, 72, 692], [218, 384, 218, 570], [218, 384, 268, 690],
            [218, 384, 268, 735], [218, 384, 268, 778], [218, 384, 456, 540, 780, 745], [360, 384, 222, 160], [360, 384, 276, 514],
            [350, 231, 585, 150], [350, 231, 385, 276], [376, 630, 376, 232], [376, 630, 455, 565], [487, 234, 500, 200], [484, 279, 1190, 78],
            [547, 200, 837, 90], [500, 200, 580, 655, 660, 745], [711, 123, 755, 95], [802, 98, 837, 95], [992, 96, 1190, 70],
            [992, 96, 1185, 130], [992, 96, 1187, 200], [1003, 96, 1014, 234], [1120, 234, 1187, 205], [1185, 130, 595, 768],
            [634, 150, 325, 692], [634, 150, 350, 734], [780, 364, 837, 100], [780, 364, 776, 745], [558, 564, 1142, 790],
            [553, 609, 780, 750], [410, 577, 455, 560], [410, 577, 455, 605], [506, 662, 530, 662], [575, 662, 655, 740],
            [320, 692, 385, 680], [320, 692, 388, 715], [348, 734, 388, 734], [315, 778, 388, 782], [512, 731, 545, 765], [510, 785, 545, 770],
            [594, 767, 780, 762], [702, 744, 780, 748], [932, 752, 1142, 742], [932, 752, 1142, 795], [932, 752, 1142, 838], [932, 752, 988, 845],
            [1095, 846, 1140, 850], [300, 160, 294, 206], [410, 156, 332, 206], [455, 514, 395, 552]
        ],
        chart: [77, 526]
    },
    {
        x: 914, y: 31,
        nodes: [
            ["gray", 148, 37, 64, 34, 2, 1], ["gray", 807, 168, 97, 86, 6], ["yellow", 983, 199, 134, 33, 2], ["yellow", 990, 288, 136, 32, 2],
            ["gray", 823, 314, 105, 87, 6], ["pink", 592, 285, 144, 48, 3], ["gray", 426, 301, 95, 37, 2], ["gray", 426, 347, 92, 36, 2],
            ["green", 264, 339, 122, 46, 2], ["gray", 274, 403, 64, 62, 4], ["gray", 375, 408, 82, 50, 3], ["gray", 564, 393, 39, 33, 2],
            ["yellow", 687, 411, 130, 34, 2], ["yellow", 876, 411, 130, 36, 2], ["blue", 90, 469, 131, 60, 4], ["gray", 277, 484, 63, 32, 2],
            ["gray", 277, 531, 63, 62, 4], ["gray", 379, 537, 76, 50, 3], ["green", 256, 609, 121, 48, 2], ["gray", 403, 607, 94, 37, 2],
            ["gray", 403, 652, 91, 37, 2], ["gray", 265, 667, 76, 33, 2, 1], ["gray", 97, 721, 114, 33, 2], ["gray", 97, 763, 46, 31, 2],
            ["gray", 97, 798, 74, 35, 2], ["gray", 99, 848, 38, 33, 2], ["green", 220, 727, 124, 46, 2], ["green", 220, 788, 124, 47, 2],
            ["green", 222, 852, 122, 47, 2], ["gray", 381, 732, 38, 34, 2], ["gray", 381, 856, 38, 34, 2], ["gray", 474, 717, 36, 33, 2],
            ["yellow", 429, 793, 127, 31, 2], ["yellow", 588, 781, 130, 37, 2], ["pink", 606, 694, 143, 48, 3],
            ["gray", 816, 598, 103, 87, 6], ["gray", 816, 697, 98, 85, 6], ["yellow", 980, 627, 134, 33, 2], ["yellow", 977, 712, 135, 33, 2]
        ],
        links: [
            [225, 54, 586, 305], [225, 54, 390, 365, 575, 790], [738, 309, 800, 212], [738, 309, 980, 210], [738, 309, 986, 298], [738, 309, 870, 430],
            [738, 309, 820, 355], [905, 212, 978, 225], [930, 357, 986, 305], [738, 320, 345, 810], [521, 321, 552, 405], [520, 366, 870, 430],
            [388, 363, 420, 320], [388, 363, 420, 365], [605, 408, 586, 315], [235, 499, 270, 500], [235, 499, 90, 735], [235, 499, 90, 776],
            [235, 499, 90, 815], [235, 499, 90, 864], [235, 499, 420, 400, 586, 305], [235, 499, 600, 712], [340, 435, 370, 435],
            [340, 562, 374, 562], [378, 634, 396, 624], [378, 634, 396, 670], [345, 684, 420, 330], [500, 626, 555, 405], [498, 670, 600, 715],
            [424, 749, 555, 415], [422, 873, 468, 740], [345, 749, 378, 749], [345, 811, 418, 811], [345, 876, 376, 872], [145, 778, 218, 765],
            [173, 816, 218, 800], [140, 865, 218, 872], [512, 734, 600, 718], [752, 719, 810, 642], [752, 719, 810, 740], [752, 719, 970, 722],
            [752, 719, 975, 640], [752, 719, 420, 800], [752, 719, 580, 795], [922, 642, 975, 645], [916, 740, 970, 735], [235, 499, 235, 610]
        ],
        chart: [97, 568]
    },
    {
        x: 284, y: 421, picked: true,
        nodes: [
            ["gray", 546, 61, 152, 36, 2], ["green", 551, 103, 125, 49, 2], ["gray", 727, 82, 43, 37, 2], ["pink", 808, 74, 148, 50, 3],
            ["yellow", 1163, 55, 131, 40, 2], ["yellow", 1156, 116, 133, 36, 2], ["yellow", 1141, 226, 138, 37, 2], ["yellow", 1141, 310, 138, 37, 2],
            ["gray", 222, 142, 71, 66, 4], ["gray", 328, 148, 84, 52, 3], ["green", 191, 211, 126, 48, 2], ["gray", 352, 217, 100, 40, 2],
            ["gray", 355, 263, 92, 38, 2], ["gray", 471, 187, 41, 36, 2], ["gray", 970, 175, 100, 87, 6], ["gray", 967, 271, 109, 90, 6],
            ["blue", 45, 358, 128, 61, 4], ["gray", 274, 373, 67, 34, 2], ["gray", 679, 394, 67, 37, 2, 1],
            ["gray", 247, 484, 67, 66, 4], ["gray", 338, 490, 84, 54, 3], ["green", 250, 555, 127, 50, 2], ["gray", 424, 550, 99, 39, 2],
            ["gray", 424, 595, 94, 39, 2], ["gray", 250, 613, 82, 36, 2, 1], ["green", 347, 643, 126, 49, 2], ["gray", 499, 649, 39, 37, 2],
            ["gray", 44, 679, 117, 33, 2], ["gray", 239, 679, 48, 33, 2], ["gray", 238, 721, 76, 36, 2], ["gray", 239, 764, 39, 35, 2],
            ["green", 355, 710, 124, 50, 2], ["green", 352, 764, 125, 50, 2], ["gray", 516, 753, 41, 37, 2], ["gray", 625, 730, 42, 36, 2],
            ["pink", 748, 731, 148, 50, 3], ["yellow", 1114, 731, 132, 36, 2], ["yellow", 1114, 779, 132, 39, 2], ["yellow", 1132, 853, 136, 37, 2],
            ["yellow", 1141, 936, 136, 37, 2], ["gray", 910, 832, 97, 90, 6], ["gray", 907, 925, 109, 91, 6]
        ],
        links: [
            [187, 389, 541, 80], [187, 389, 802, 98], [187, 389, 270, 391], [187, 389, 37, 695], [187, 389, 184, 570], [187, 389, 232, 696],
            [187, 389, 232, 740], [187, 389, 232, 782], [187, 389, 425, 550, 520, 600, 745, 755], [345, 391, 217, 176], [345, 391, 240, 517],
            [318, 235, 550, 152], [318, 235, 350, 282], [343, 633, 343, 235], [343, 633, 420, 568], [343, 633, 420, 612], [454, 238, 466, 205],
            [450, 283, 1160, 85], [514, 205, 720, 100], [514, 205, 802, 100], [465, 205, 550, 665, 618, 745], [678, 127, 722, 98], [772, 100, 802, 98],
            [960, 100, 1160, 73], [960, 100, 1155, 132], [960, 100, 1140, 245], [960, 100, 1140, 325], [968, 100, 965, 218], [968, 100, 959, 316],
            [1072, 218, 1152, 135], [1077, 317, 1140, 333], [1152, 135, 562, 772], [602, 152, 290, 696], [602, 152, 318, 740],
            [757, 412, 798, 105], [757, 412, 740, 745], [525, 568, 1112, 797], [520, 613, 745, 755], [376, 580, 420, 565], [376, 580, 420, 610],
            [474, 667, 498, 667], [543, 667, 618, 745], [290, 696, 350, 685], [290, 696, 355, 715], [318, 740, 356, 737], [318, 740, 380, 692],
            [280, 782, 352, 787], [480, 737, 512, 768], [478, 790, 512, 772], [559, 772, 745, 766], [670, 748, 745, 752], [900, 757, 1110, 747],
            [900, 757, 1110, 795], [900, 757, 1130, 868], [900, 757, 1140, 950], [908, 757, 903, 877], [908, 757, 900, 970], [1008, 877, 1130, 880],
            [1017, 970, 1140, 964], [295, 175, 328, 175], [415, 175, 320, 210], [316, 517, 338, 517], [430, 517, 360, 555], [330, 517, 316, 555]
        ],
        chart: [41, 527]
    }
];

const dashes = ["12 1 9 2 14 1", "8 1 17 2 6 1", "15 2 7 1 11 1", "6 1 10 1 20 2"];
const fill = { pink: [0.25, 0.86, 0.4], yellow: [0.3, 0.93], green: [0.4, 0.46], blue: [0.3, 0.75, 0.55, 0.94] };

function drawNode([kind, x, y, w, h, rows, source], index) {
    let out = `<rect class="node ${kind}" x="${x}" y="${y}" width="${w}" height="${h}" rx="6"/>`;
    const step = kind === "green" ? 15 : (h - 18) / (rows - 1);
    for (let i = 0; i < rows; i++) {
        const part = fill[kind] ? fill[kind][i] : (rows > 3 && i > 1 ? 0.5 : 0.72);
        const ly = y + 9 + i * step;
        const dash = dashes[(index + i) % dashes.length];
        out += `<path class="strip ${i ? "" : "head"}" stroke-dasharray="${dash}" d="M${x + 4} ${ly}h${w * part}"/>`;
        if (kind === "gray" && rows > 3 && i > 1) {
            out += `<path class="strip" d="M${x + w - 18} ${ly}h13"/>`;
        }
    }
    out += `<circle cx="${x + w - 11}" cy="${y + 10}" r="4" fill="#eef" stroke="#99b"/>`;
    const mid = y + h / 2;
    if (kind !== "yellow") {
        out += `<rect class="out" x="${x + w}" y="${mid - 3}" width="6" height="6"/>`;
    }
    if (kind === "green") {
        out += `<path class="pin" d="M${x - 2} ${y + h - 2}h5v5h-5zM${x + w / 2} ${y + h}h5v5h-5z"/>`;
    } else if (kind === "yellow" || kind === "pink" || (rows === 2 && w > 85 && w < 101)) {
        out += `<path class="in" d="M${x - 6} ${mid - 9}h7v7h-7zM${x - 6} ${mid}h7v8h-7z"/><path class="pin" d="M${x - 11} ${mid - 8}h4v4h-4zM${x - 11} ${mid + 2}h4v4h-4z"/>`;
    } else if (kind === "gray" && !source) {
        out += `<rect class="in" x="${x - 8}" y="${mid - 3}" width="8" height="6"/><rect class="pin" x="${x - 12}" y="${mid - 3}" width="4" height="5"/>`;
    }
    return out;
}

function drawChart([x, y]) {
    const bars = [30, 38, 44, 50, 50, 46, 38, 40, 34, 30, 28, 32, 34, 26, 22, 18, 14, 12, 10, 8, 8, 10, 14, 18, 24, 30];
    let out = `<g transform="translate(${x} ${y})"><rect width="152" height="83" fill="#fff" stroke="#8fbdde" stroke-width="2"/>`;
    out += `<path d="M50 0v83M108 0v83M0 28h152M0 56h152" stroke="#bbb"/>`;
    bars.forEach((b, i) => {
        out += `<rect x="${7 + i * 5.3}" y="${82 - b}" width="3.5" height="${b}" fill="#f9b717"/>`;
    });
    out += `<path d="M8 60l13 18 13-16 8 6 28-32 14 12 32-40 28 36" fill="none" stroke="#1e6ec4" stroke-width="4"/>`;
    out += `<path d="M3 0v83M148 0v83" stroke="#3d9c4b" stroke-width="5"/><rect x="30" y="7" width="28" height="13" fill="#fff" stroke="#aaa"/><path class="strip" d="M34 13h20" stroke-dasharray="6 1"/></g>`;
    return out;
}

document.getElementById("diagram").innerHTML = schemes.map(s => `
    <g class="${s.picked ? "picked" : ""}" transform="translate(${s.x} ${s.y}) scale(0.3333)">
        ${s.nodes.map(drawNode).join("")}
        ${drawChart(s.chart)}
        ${s.links.map(l => `<polyline class="link" points="${l.join(" ")}"/>`).join("")}
    </g>`).join("");
```
